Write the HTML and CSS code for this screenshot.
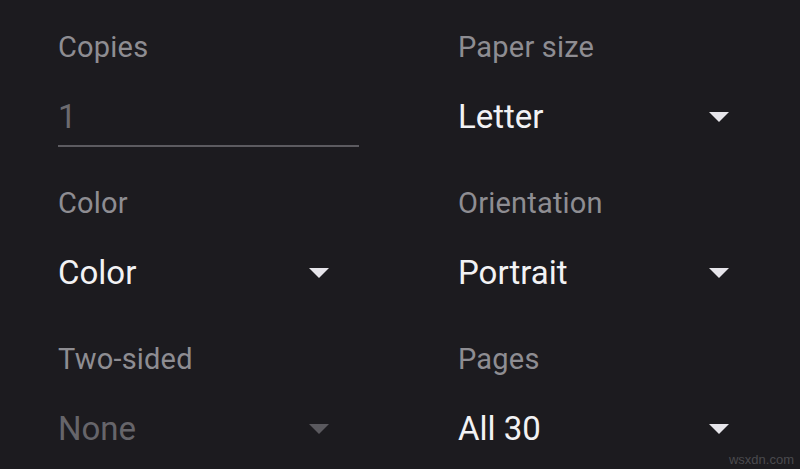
FILE: index.html
```html
<!DOCTYPE html>
<html>
<head>
<meta charset="utf-8">
<link rel="stylesheet" href="styles.css">
</head>
<body>
<div class="grid">
  <div class="field">
    <div class="label">Copies</div>
    <div class="value input"><span class="muted">1</span></div>
  </div>
  <div class="field">
    <div class="label">Paper size</div>
    <div class="value select"><span>Letter</span><span class="arrow"></span></div>
  </div>
  <div class="field">
    <div class="label">Color</div>
    <div class="value select"><span>Color</span><span class="arrow"></span></div>
  </div>
  <div class="field">
    <div class="label">Orientation</div>
    <div class="value select"><span>Portrait</span><span class="arrow"></span></div>
  </div>
  <div class="field">
    <div class="label">Two-sided</div>
    <div class="value select disabled"><span>None</span><span class="arrow"></span></div>
  </div>
  <div class="field">
    <div class="label">Pages</div>
    <div class="value select"><span>All 30</span><span class="arrow"></span></div>
  </div>
</div>
<div class="watermark">wsxdn.com</div>
</body>
</html>
```
FILE: styles.css
```css
html, body {
  margin: 0;
  padding: 0;
  background: #1c1b1f;
  width: 800px;
  height: 469px;
  overflow: hidden;
  font-family: Roboto, "Noto Sans", sans-serif;
}
body {
  position: relative;
  padding-top: 30px;
  box-sizing: border-box;
}
.grid {
  display: grid;
  grid-template-columns: 400px 342px;
  padding-left: 58px;
  row-gap: 39px;
}
.field {
  display: flex;
  flex-direction: column;
}
.label {
  font-size: 29px;
  line-height: 34px;
  height: 34px;
  color: #8e8d92;
  letter-spacing: 0.2px;
}
.value {
  margin-top: 33px;
  height: 40px;
  font-size: 33px;
  line-height: 40px;
  color: #f2f2f4;
  padding-bottom: 8px;
  border-bottom: 2px solid transparent;
  display: flex;
  align-items: center;
  justify-content: space-between;
}
.input {
  width: 301px;
  border-bottom-color: #5c5b60;
}
.muted {
  color: #6c6b70;
}
.select {
  width: 271px;
}
.arrow {
  width: 0;
  height: 0;
  border-left: 10px solid transparent;
  border-right: 10px solid transparent;
  border-top: 10px solid #e6e5ea;
}
.disabled {
  color: #66656a;
}
.disabled .arrow {
  border-top-color: #5a595e;
}
.watermark {
  position: absolute;
  right: 6px;
  bottom: 2px;
  font-family: "Liberation Sans", Arial, sans-serif;
  font-size: 13px;
  color: #4a4a4e;
}
```
